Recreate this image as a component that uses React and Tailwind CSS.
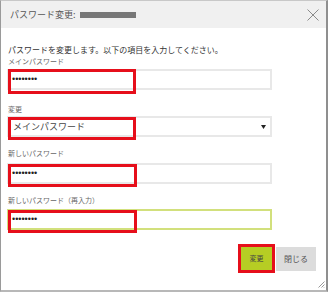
export default function App() {
  return (
    <div className="relative w-[328px] h-[292px] bg-white border-t border-l border-r-2 border-b-2 border-t-[#c8c8c8] border-l-[#9a9a9a] border-r-[#8f8f8f] border-b-[#b8b8b8] flex flex-col font-['Noto_Sans_CJK_JP','Noto_Sans',sans-serif]">

      {/* header */}
      <div className="h-[27px] shrink-0 bg-[#f0f0f0] flex items-center pl-[9px] pr-[7px]">
        <span className="text-[9px] leading-none text-[#555]">パスワード変更:</span>
        <span className="ml-[4px] w-[56px] h-[6px] bg-[#777]" />
        <svg className="ml-auto" width="12" height="12" viewBox="0 0 12 12">
          <path d="M0.5 0.5L11.5 11.5M11.5 0.5L0.5 11.5" stroke="#8a8a8a" strokeWidth="1" fill="none" />
        </svg>
      </div>

      {/* body */}
      <div className="pl-[6px] pr-[10px] flex flex-col">
        <p className="mt-[16px] ml-px text-[8px] leading-[12px] text-[#333]">
          パスワードを変更します。以下の項目を入力してください。
        </p>

        <p className="ml-px text-[7px] leading-[10px] text-[#666]">メインパスワード</p>
        <div className="relative mt-[3px] w-[265px] h-[21px] border-2 border-[#e8e8e8] flex items-center pl-[3px]">
          <span className="font-['Liberation_Sans',sans-serif] text-[9px] leading-none text-[#222]">••••••••</span>
          <div className="absolute -left-[1px] -top-[2px] w-[128px] h-[25px] border-[3px] border-[#e60f1b]" />
        </div>

        <p className="mt-[14px] ml-px text-[7px] leading-[10px] text-[#666]">変更</p>
        <div className="relative mt-[2px] w-[265px] h-[21px] border-2 border-[#e8e8e8] flex items-center justify-between pl-[4px] pr-[4px]">
          <span className="text-[9px] leading-none text-[#444]">メインパスワード</span>
          <svg width="5" height="4" viewBox="0 0 5 4">
            <path d="M0 0H5L2.5 4Z" fill="#222" />
          </svg>
          <div className="absolute -left-[1px] -top-[1px] w-[128px] h-[23px] border-[3px] border-[#e60f1b]" />
        </div>

        <p className="mt-[11px] ml-px text-[7px] leading-[10px] text-[#666]">新しいパスワード</p>
        <div className="relative mt-[5px] w-[265px] h-[21px] border-2 border-[#e8e8e8] flex items-center pl-[3px]">
          <span className="font-['Liberation_Sans',sans-serif] text-[9px] leading-none text-[#222]">••••••••</span>
          <div className="absolute -left-[1px] -top-[1px] w-[129px] h-[23px] border-[3px] border-[#e60f1b]" />
        </div>

        <p className="mt-[11px] ml-px text-[7px] leading-[10px] text-[#666]">新しいパスワード（再入力）</p>
        <div className="relative mt-[4px] w-[265px] h-[21px] border-2 border-[#d2e07c] flex items-center pl-[3px]">
          <span className="font-['Liberation_Sans',sans-serif] text-[9px] leading-none text-[#222]">••••••••</span>
          <div className="absolute -left-[1px] -top-[1px] w-[129px] h-[23px] border-[3px] border-[#e60f1b]" />
        </div>

        {/* buttons */}
        <div className="mt-[17px] flex justify-end items-start">
          <div className="relative w-[31px] h-[23px] bg-[#b6cd24] flex items-center justify-center">
            <span className="text-[7px] leading-none text-[#444]">変更</span>
            <div className="absolute -inset-[3px] border-[3px] border-[#e60f1b]" />
          </div>
          <div className="ml-[4px] w-[40px] h-[24px] bg-[#dcdcdc] flex items-center justify-center">
            <span className="text-[8px] leading-none text-[#555]">閉じる</span>
          </div>
        </div>
      </div>

      {/* resize grip */}
      <svg className="absolute bottom-[2px] right-[1px]" width="8" height="8" viewBox="0 0 8 8">
        <path d="M7.5 1.5L1.5 7.5M7.5 4.5L4.5 7.5M7.5 7L7 7.5" stroke="#999" strokeWidth="1" fill="none" />
      </svg>
    </div>
  );
}
